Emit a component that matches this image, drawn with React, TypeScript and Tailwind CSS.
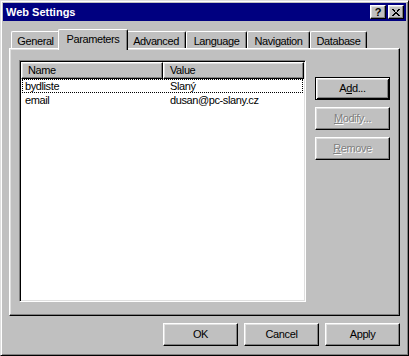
import React from "react";

const raised =
  "border border-t-white border-l-white border-r-black border-b-black shadow-[inset_-1px_-1px_#808080,inset_1px_1px_#dfdfdf]";

const tabs = [
  { label: "General", w: "w-[49px]" },
  { label: "Parameters", w: "w-[70px]", active: true },
  { label: "Advanced", w: "w-[60px]" },
  { label: "Language", w: "w-[61px]" },
  { label: "Navigation", w: "w-[63px]" },
  { label: "Database", w: "w-[57px]" },
];

function Btn({
  children,
  disabled,
  def,
}: {
  children: React.ReactNode;
  disabled?: boolean;
  def?: boolean;
}) {
  return (
    <div
      className={
        "w-[75px] h-[23px] flex items-center justify-center bg-[#c0c0c0] " +
        (def
          ? "border border-black shadow-[inset_1px_1px_#fff,inset_-1px_-1px_#000,inset_2px_2px_#dfdfdf,inset_-2px_-2px_#808080]"
          : raised) +
        (disabled
          ? " text-[#808080] [text-shadow:1px_1px_0_#fff]"
          : " text-black")
      }
    >
      {children}
    </div>
  );
}

export default function App() {
  return (
    <div
      className="w-[409px] h-[356px] bg-[#c0c0c0] border border-t-[#dfdfdf] border-l-[#dfdfdf] border-r-black border-b-black p-[2px] shadow-[inset_1px_1px_#fff,inset_-1px_-1px_#808080] text-[11px] tracking-[-0.4px] text-black leading-none select-none"
      style={{ fontFamily: '"Liberation Sans", Arial, sans-serif' }}
    >
      {/* title bar */}
      <div className="h-[18px] bg-[#000080] flex items-center justify-between pl-[3px] pr-[2px]">
        <span className="text-white font-bold tracking-normal text-[11px]">
          Web Settings
        </span>
        <div className="flex gap-[2px]">
          <div
            className={
              raised +
              " w-[16px] h-[14px] bg-[#c0c0c0] flex items-center justify-center font-bold text-[11px] tracking-normal"
            }
          >
            ?
          </div>
          <div
            className={
              raised +
              " w-[16px] h-[14px] bg-[#c0c0c0] flex items-center justify-center"
            }
          >
            <svg width="8" height="7" viewBox="0 0 8 7" shapeRendering="crispEdges">
              <path
                d="M0 0h2v1H0zM1 1h2v1H1zM2 2h1v1H2zM5 2h1v1H5zM6 0h2v1H6zM5 1h2v1H5zM3 3h2v1H3zM2 4h2v1H2zM4 4h2v1H4zM1 5h2v1H1zM5 5h2v1H5zM0 6h2v1H0zM6 6h2v1H6z"
                fill="#000"
              />
            </svg>
          </div>
        </div>
      </div>

      <div className="px-[6px]">
        {/* tab strip */}
        <div className="mt-[8px] h-[19px] flex items-end pl-[2px]">
          {tabs.map((t) =>
            t.active ? (
              <div
                key={t.label}
                className={
                  t.w +
                  " -mx-[2px] relative z-10 h-[21px] -mb-[2px] bg-[#c0c0c0] border-t border-l border-r border-t-white border-l-white border-r-black rounded-t-[2px] shadow-[inset_-1px_0_#808080] flex items-start justify-center pt-[4px]"
                }
              >
                {t.label}
              </div>
            ) : (
              <div
                key={t.label}
                className={
                  t.w +
                  " h-[17px] bg-[#c0c0c0] border-t border-l border-r border-t-white border-l-white border-r-black rounded-t-[2px] shadow-[inset_-1px_0_#808080] flex items-start justify-center pt-[4px]"
                }
              >
                {t.label}
              </div>
            )
          )}
        </div>

        {/* panel */}
        <div
          className={
            raised + " h-[268px] flex pl-[9px] pt-[11px] gap-[9px]"
          }
        >
          <div className="w-[287px] h-[242px] bg-white border border-t-[#808080] border-l-[#808080] border-r-white border-b-white shadow-[inset_1px_1px_#000,inset_-1px_-1px_#dfdfdf] p-[1px]">
            <div className="flex">
              <div className={raised + " w-[142px] h-[17px] flex items-center pl-[6px] bg-[#c0c0c0]"}>
                Name
              </div>
              <div className={raised + " w-[141px] h-[17px] flex items-center pl-[6px] bg-[#c0c0c0]"}>
                Value
              </div>
            </div>
            <div className="flex h-[14px] items-center border border-dotted border-black mx-[1px]">
              <div className="w-[141px] pl-[2px]">bydliste</div>
              <div className="pl-[6px]">Slaný</div>
            </div>
            <div className="flex h-[14px] items-center border border-transparent mx-[1px]">
              <div className="w-[141px] pl-[2px]">email</div>
              <div className="pl-[6px]">dusan@pc-slany.cz</div>
            </div>
          </div>

          <div className="flex flex-col gap-[7px] mt-[17px]">
            <Btn def>
              A<u>d</u>d...
            </Btn>
            <Btn disabled>
              <u>M</u>odify...
            </Btn>
            <Btn disabled>
              <u>R</u>emove
            </Btn>
          </div>
        </div>

        {/* bottom buttons */}
        <div className="flex justify-end gap-[6px] mt-[7px]">
          <Btn>OK</Btn>
          <Btn>Cancel</Btn>
          <Btn>Apply</Btn>
        </div>
      </div>
    </div>
  );
}
